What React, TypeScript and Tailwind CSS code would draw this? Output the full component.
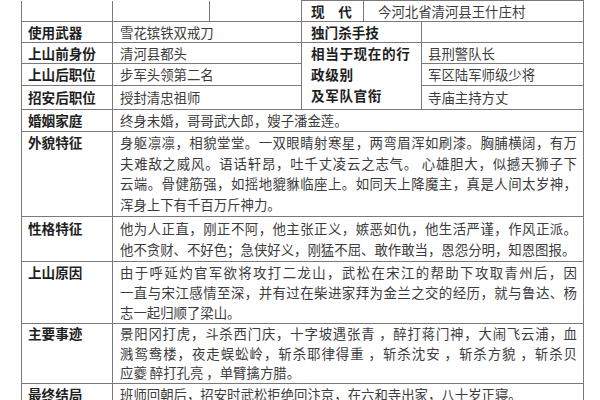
import React from 'react';

const font = { fontFamily: '"Noto Sans CJK SC", "Noto Sans", sans-serif' };

const cell = 'border border-[#7a7a7a] text-[13.4px] leading-[17px] text-[#3c3c3c] align-middle p-0';
const label = 'border border-[#7a7a7a] text-[13.6px] leading-[17px] font-bold text-[#1e1e1e] pl-[6px] align-middle p-0';

// Lines are laid out one by one; all but the last are justified to the full cell width
const Lines: React.FC<{ lines: string[] }> = ({ lines }) => (
  <>
    {lines.map((line, i) => (
      <div
        key={i}
        className={i < lines.length - 1 ? 'text-justify [text-align-last:justify]' : ''}
      >
        {line}
      </div>
    ))}
  </>
);

interface LongRow {
  title: string;
  lines: string[];
  height: string;
  pad: string;
  lead: string;
}

const longRows: LongRow[] = [
  {
    title: '外貌特征',
    height: 'h-[85px]',
    pad: 'pt-0',
    lead: 'leading-[20.5px]',
    lines: [
      '身躯凛凛，相貌堂堂。一双眼睛射寒星，两弯眉浑如刷漆。胸脯横阔，有万',
      '夫难敌之威风。语话轩昂，吐千丈凌云之志气。 心雄胆大，似撼天狮子下',
      '云端。骨健筋强，如摇地貔貅临座上。如同天上降魔主，真是人间太岁神，',
      '浑身上下有千百万斤神力。',
    ],
  },
  {
    title: '性格特征',
    height: 'h-[45px]',
    pad: 'pt-[1px]',
    lead: 'leading-[21px]',
    lines: [
      '他为人正直，刚正不阿，他主张正义，嫉恶如仇，他生活严谨，作风正派。',
      '他不贪财、不好色；急侠好义，刚猛不屈、敢作敢当，恩怨分明，知恩图报。',
    ],
  },
  {
    title: '上山原因',
    height: 'h-[62px]',
    pad: 'pt-0',
    lead: 'leading-[20px]',
    lines: [
      '由于呼延灼官军欲将攻打二龙山，武松在宋江的帮助下攻取青州后，因',
      '一直与宋江感情至深，并有过在柴进家拜为金兰之交的经历，就与鲁达、杨',
      '志一起归顺了梁山。',
    ],
  },
  {
    title: '主要事迹',
    height: 'h-[59px]',
    pad: 'pt-0',
    lead: 'leading-[19.5px]',
    lines: [
      '景阳冈打虎，斗杀西门庆，十字坡遇张青 ，醉打蒋门神，大闹飞云浦，血',
      '溅鸳鸯楼，夜走蜈蚣岭，斩杀耶律得重 ，斩杀沈安 ，斩杀方貌 ，斩杀贝',
      '应夔 醉打孔亮 ，单臂擒方腊。',
    ],
  },
  {
    title: '最终结局',
    height: 'h-[26px]',
    pad: 'pt-0',
    lead: 'leading-[20px]',
    lines: ['班师回朝后，招安时武松拒绝回汴京，在六和寺出家，八十岁正寝。'],
  },
];

export default function App() {
  return (
    <div className="w-[600px] h-[400px] overflow-hidden bg-white" style={font}>
      <table className="ml-[21px] w-[562px] table-fixed border-collapse">
        <colgroup>
          <col className="w-[91px]" />
          <col className="w-[97px]" />
          <col className="w-[92px]" />
          <col className="w-[62px]" />
          <col className="w-[58px]" />
          <col className="w-[162px]" />
        </colgroup>
        <tbody>
          <tr className="h-[21px]">
            <td className={`${cell} border-t-0`} />
            <td className={`${cell} border-t-0`} />
            <td className={`${cell} border-t-0`} />
            <td className={`${label} pl-[9px]`}>现　代</td>
            <td colSpan={2} className={`${cell} pl-[14px]`}>
              今河北省清河县王什庄村
            </td>
          </tr>
          <tr className="h-[21px]">
            <td className={`${label} pl-[6px]`}>使用武器</td>
            <td colSpan={2} className={`${cell} pl-[7px]`}>雪花镔铁双戒刀</td>
            <td colSpan={2} className={`${label} pl-[9px]`}>独门杀手技</td>
            <td className={cell} />
          </tr>
          <tr className="h-[21px]">
            <td className={`${label} pl-[6px]`}>上山前身份</td>
            <td colSpan={2} className={`${cell} pl-[7px]`}>清河县都头</td>
            <td
              colSpan={2}
              rowSpan={3}
              className={`${label} pl-[9px] align-top pt-0 leading-[21px] tracking-[0.6px]`}
            >
              <div>相当于现在的行</div>
              <div>政级别</div>
              <div>及军队官衔</div>
            </td>
            <td className={`${cell} pl-[6px]`}>县刑警队长</td>
          </tr>
          <tr className="h-[22px]">
            <td className={`${label} pl-[6px]`}>上山后职位</td>
            <td colSpan={2} className={`${cell} pl-[7px]`}>步军头领第二名</td>
            <td className={`${cell} pl-[6px]`}>军区陆军师级少将</td>
          </tr>
          <tr className="h-[24px]">
            <td className={`${label} pl-[6px]`}>招安后职位</td>
            <td colSpan={2} className={`${cell} pl-[7px]`}>授封清忠祖师</td>
            <td className={`${cell} pl-[6px]`}>寺庙主持方丈</td>
          </tr>
          <tr className="h-[22px]">
            <td className={`${label} pl-[6px]`}>婚姻家庭</td>
            <td colSpan={5} className={`${cell} pl-[7px]`}>
              终身未婚，哥哥武大郎，嫂子潘金莲。
            </td>
          </tr>
          {longRows.map((row) => (
            <tr key={row.title} className={row.height}>
              <td className={`${label} pl-[6px] align-top ${row.pad} ${row.lead}`}>{row.title}</td>
              <td colSpan={5} className={`${cell} align-top pl-[7px] pr-[6px] ${row.pad} ${row.lead}`}>
                <Lines lines={row.lines} />
              </td>
            </tr>
          ))}
        </tbody>
      </table>
    </div>
  );
}
